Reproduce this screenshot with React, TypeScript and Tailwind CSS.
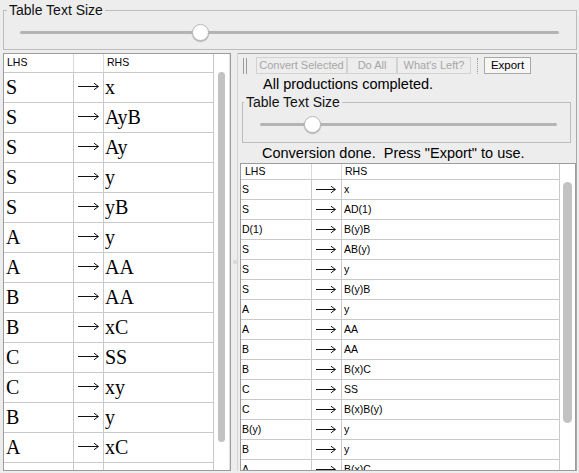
import React from 'react';

const leftRows: [string, string][] = [
  ['S', 'x'], ['S', 'AyB'], ['S', 'Ay'], ['S', 'y'], ['S', 'yB'], ['A', 'y'], ['A', 'AA'],
  ['B', 'AA'], ['B', 'xC'], ['C', 'SS'], ['C', 'xy'], ['B', 'y'], ['A', 'xC'], ['', ''],
];

const rightRows: [string, string][] = [
  ['S', 'x'], ['S', 'AD(1)'], ['D(1)', 'B(y)B'], ['S', 'AB(y)'], ['S', 'y'], ['S', 'B(y)B'],
  ['A', 'y'], ['A', 'AA'], ['B', 'AA'], ['B', 'B(x)C'], ['C', 'SS'], ['C', 'B(x)B(y)'],
  ['B(y)', 'y'], ['B', 'y'], ['A', 'B(x)C'],
];

function Arrow({ w }: { w: number }) {
  return (
    <svg width={w} height={9} viewBox={`0 0 ${w} 9`}>
      <path d={`M0 4.5H${w - 0.6}M${w - 5} 1.2L${w - 0.6} 4.5L${w - 5} 7.8`} stroke="#111" strokeWidth={1} fill="none" />
    </svg>
  );
}

function Slider({ knob }: { knob: number }) {
  // track with a round thumb sitting on it
  return (
    <div className="relative h-[3px] rounded-full bg-[#b4b4b4]">
      <div
        className="absolute top-[-7px] h-[17px] w-[17px] rounded-full border border-[#b9b9b9] bg-white shadow-[0_1px_1px_rgba(0,0,0,0.25)]"
        style={{ left: knob - 8 }}
      />
    </div>
  );
}

function ToolButton({ label, w, enabled }: { label: string; w: number; enabled?: boolean }) {
  return (
    <div
      className={
        enabled
          ? 'flex h-[17px] items-center justify-center border border-[#a8a8a8] bg-[#f7f7f7] text-[11.5px] text-black'
          : 'flex h-[17px] items-center justify-center border border-[#d2d2d2] text-[11px] text-[#a6a6a6]'
      }
      style={{ width: w }}
    >
      {label}
    </div>
  );
}

export default function App() {
  return (
    <div className="h-[473px] w-[579px] overflow-hidden bg-[#ededed] pt-[2px] font-['Liberation_Sans',Arial,sans-serif] text-black">
      {/* top text size control */}
      <fieldset className="ml-[3px] h-[48px] w-[574px] border border-[#bdbdbd]">
        <legend className="ml-[3px] px-[2px] text-[14px] leading-[16px] text-[#111]">Table Text Size</legend>
        <div className="pl-[16px] pr-[17px] pt-[13px]">
          <Slider knob={180} />
        </div>
      </fieldset>

      <div className="mt-[3px] flex h-[418px]">
        {/* original grammar */}
        <div className="ml-[3px] flex h-full w-[228px] overflow-hidden border border-[#9c9c9c] bg-white">
          <div className="w-[210px] shrink-0">
            <div className="flex h-[19px] border-b border-[#c9c9c9] text-[10.5px] leading-[17px]">
              <div className="w-[70px] border-r border-[#d9d9d9] pl-[3px]">LHS</div>
              <div className="w-[30px] border-r border-[#d9d9d9]" />
              <div className="w-[110px] border-r border-[#c9c9c9] pl-[3px]">RHS</div>
            </div>
            {leftRows.map(([l, r], i) => (
              <div key={i} className="flex h-[30px] border-b border-[#c9c9c9] font-['Liberation_Serif','Times_New_Roman',serif] text-[20px] leading-[28px]">
                <div className="w-[70px] border-r border-[#c9c9c9] pl-[2px]">{l}</div>
                <div className="flex w-[30px] items-center border-r border-[#c9c9c9] pb-[2px] pl-[4px]">
                  {l && <Arrow w={21} />}
                </div>
                <div className="w-[110px] border-r border-[#c9c9c9] pl-[1px]">{r}</div>
              </div>
            ))}
          </div>
          <div className="flex-1 border-r border-[#e2e2e2] pl-[4px] pt-[18px]">
            <div className="h-[370px] w-[7px] rounded-full bg-[#c2c2c2]" />
          </div>
        </div>

        {/* split divider */}
        <div className="relative w-[7px] border-r border-[#d4d4d4]">
          <div className="absolute left-[2px] top-[207px] h-[4px] w-[4px] rounded-full bg-[#d6d6d6]" />
        </div>

        {/* converted grammar */}
        <div className="flex h-full w-[339px] flex-col border-r border-t border-[#a9a9a9]">
          <div className="flex h-[21px] items-center pl-[5px] pt-[2px]">
            <div className="mr-[9px] flex h-[16px] gap-[2px]">
              <div className="w-[1px] bg-[#9a9a9a]" />
              <div className="w-[1px] bg-[#9a9a9a]" />
            </div>
            <ToolButton label="Convert Selected" w={91} />
            <ToolButton label="Do All" w={50} />
            <ToolButton label="What's Left?" w={74} />
            <div className="mx-[6px] h-[16px] border-l border-dotted border-[#9a9a9a]" />
            <ToolButton label="Export" w={47} enabled />
          </div>
          <div className="h-[18px] pl-[25px] text-[14.5px] leading-[18px]">All productions completed.</div>

          <fieldset className="ml-[4px] mt-[1px] h-[49px] w-[329px] border border-[#bdbdbd]">
            <legend className="ml-[1px] px-[2px] text-[14px] leading-[16px] text-[#111]">Table Text Size</legend>
            <div className="pl-[17px] pr-[13px] pt-[13px]">
              <Slider knob={52} />
            </div>
          </fieldset>

          <div className="h-[20px] whitespace-pre pl-[24px] text-[14.5px] leading-[20px]">Conversion done.  Press "Export" to use.</div>

          <div className="ml-[2px] flex min-h-0 w-[336px] flex-1 overflow-hidden border border-[#9c9c9c] bg-white">
            <div className="w-[319px] shrink-0">
              <div className="flex h-[16px] border-b border-[#c9c9c9] text-[10.5px] leading-[14px]">
                <div className="w-[71px] border-r border-[#d9d9d9] pl-[4px]">LHS</div>
                <div className="w-[30px] border-r border-[#d9d9d9]" />
                <div className="w-[218px] border-r border-[#c9c9c9] pl-[3px]">RHS</div>
              </div>
              {rightRows.map(([l, r], i) => (
                <div key={i} className="flex h-[20px] border-b border-[#c9c9c9] text-[10.5px] leading-[19px]">
                  <div className="w-[71px] border-r border-[#c9c9c9] pl-[1px]">{l}</div>
                  <div className="flex w-[30px] items-center border-r border-[#c9c9c9] pl-[4px]">
                    <Arrow w={20} />
                  </div>
                  <div className="w-[218px] border-r border-[#c9c9c9] pl-[2px]">{r}</div>
                </div>
              ))}
            </div>
            <div className="flex-1 pl-[3px] pt-[18px]">
              <div className="h-[241px] w-[9px] rounded-full bg-[#c2c2c2]" />
            </div>
          </div>
        </div>
      </div>
    </div>
  );
}
